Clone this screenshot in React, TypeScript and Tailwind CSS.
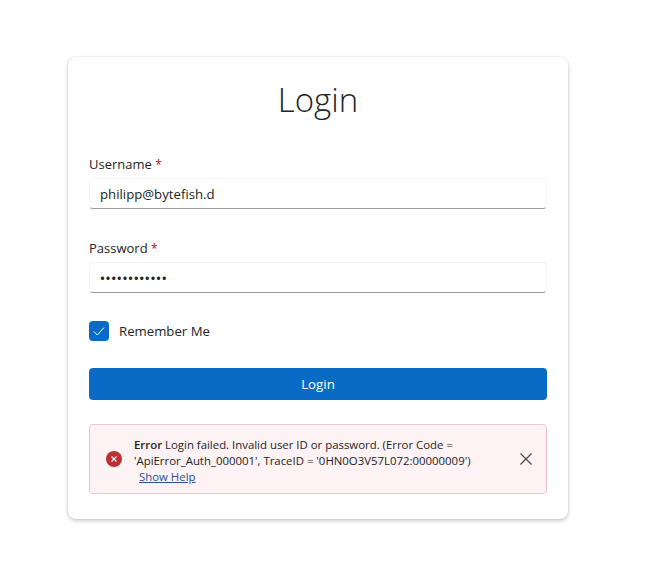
import React from "react";

function Field({ label, value, isPassword }: { label: string; value: string; isPassword?: boolean }) {
  return (
    <div className="flex flex-col">
      <label className="h-[22px] text-[13px] leading-[22px] text-[#242424]">
        {label} <span className="text-[12px] text-[#b10e1c]">*</span>
      </label>
      <div className="mt-[3px] flex h-[31px] items-center rounded-[4px] border border-[#f5f5f5] border-b-[#9a9a9a] bg-white pl-[10px] pt-[2px] text-[13.2px] text-[#242424]">
        {isPassword ? <span className="font-semibold tracking-[0.65px] text-[#242424]">{value}</span> : value}
      </div>
    </div>
  );
}

export default function App() {
  return (
    <div className="min-h-screen bg-white pl-[68px] pt-[57px] font-['Open_Sans','Noto_Sans',sans-serif]">
      <div className="flex h-[462px] w-[500px] flex-col rounded-[8px] bg-white px-[21px] pt-[20px] shadow-[0_0_2px_rgba(0,0,0,0.12),0_2px_4px_rgba(0,0,0,0.2)]">
        <h1 className="h-[46px] text-center text-[33px] leading-[46px] font-light text-[#242424]">Login</h1>

        <div className="mt-[30px] flex flex-col gap-[28px]">
          <Field label="Username" value="philipp@bytefish.d" />
          <Field label="Password" value="••••••••••••" isPassword />
        </div>

        <div className="mt-[28px] flex h-[20px] items-center gap-[10px]">
          <span className="flex h-[20px] w-[20px] items-center justify-center rounded-[4px] bg-[#0a6bc7]">
            <svg width="14" height="14" viewBox="0 0 14 14" fill="none" stroke="white" strokeWidth="1">
              <path d="M2 7.6 5.3 11 12 3.6" />
            </svg>
          </span>
          <span className="pt-[2px] text-[13.2px] text-[#242424]">Remember Me</span>
        </div>

        <button className="mt-[27px] h-[32px] w-full rounded-[4px] bg-[#0a6bc7] pt-[1px] text-[13.3px] font-medium text-white">
          Login
        </button>

        <div className="mt-[24px] flex h-[70px] items-center rounded-[4px] border border-[#f0c6cc] bg-[#fdf2f4] pl-[16px] pr-[13px]">
          <span className="flex h-[16px] w-[16px] shrink-0 items-center justify-center rounded-full bg-[#bc2f32]">
            <svg width="8" height="8" viewBox="0 0 8 8" fill="none" stroke="white" strokeWidth="1.1">
              <path d="M1.5 1.5 6.5 6.5M6.5 1.5 1.5 6.5" />
            </svg>
          </span>
          <div className="ml-[12px] flex-1 pt-[4px] text-[11.4px] leading-[16px] text-[#242424]">
            <p>
              <span className="font-semibold">Error</span> Login failed. Invalid user ID or password. (Error Code =
            </p>
            <p>'ApiError_Auth_000001', TraceID = '0HN0O3V57L072:00000009')</p>
            <a className="ml-[5px] text-[#2c4f94] underline">Show Help</a>
          </div>
          <svg width="14" height="14" viewBox="0 0 14 14" fill="none" stroke="#424242" strokeWidth="1.1" className="shrink-0">
            <path d="M1.5 1.5 12.5 12.5M12.5 1.5 1.5 12.5" />
          </svg>
        </div>
      </div>
    </div>
  );
}
